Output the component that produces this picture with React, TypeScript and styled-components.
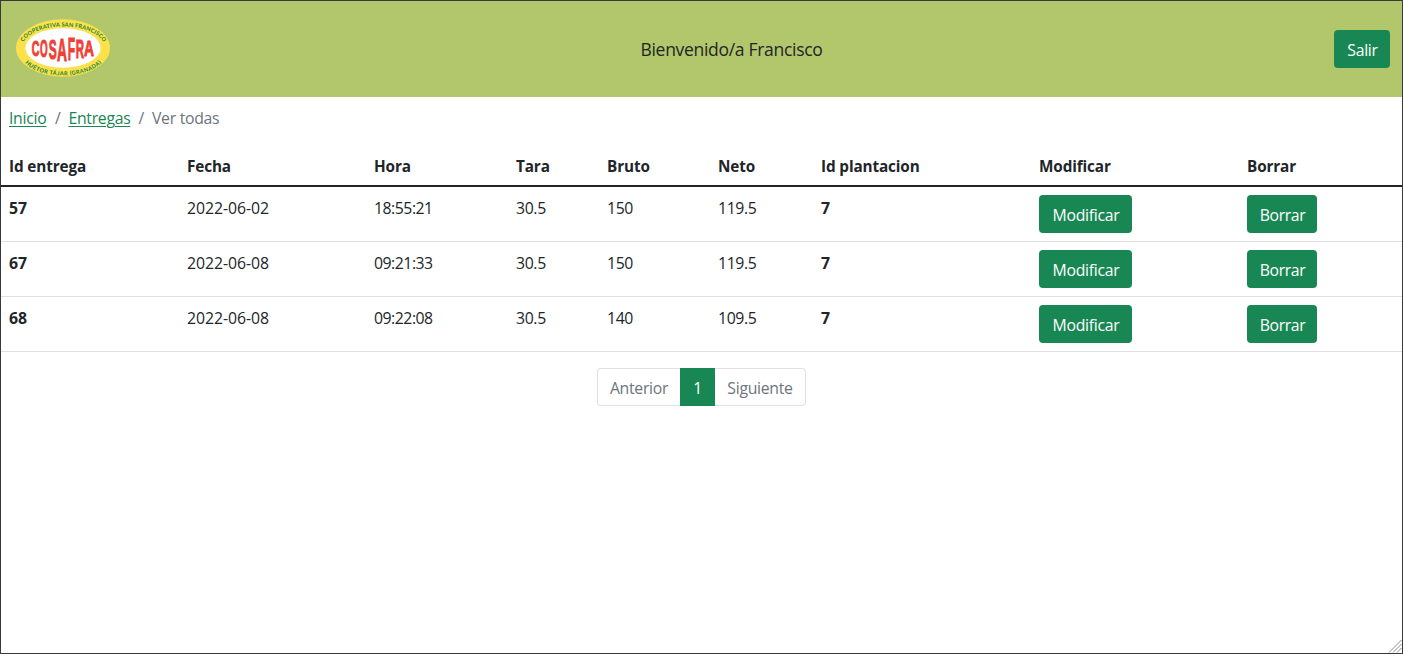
import React from "react";
import styled, { createGlobalStyle } from "styled-components";

const GlobalStyle = createGlobalStyle`
  *, *::before, *::after { box-sizing: border-box; }
  body {
    margin: 0;
    background: #fff;
    color: #212529;
    font-family: "Open Sans", "Noto Sans", sans-serif;
    font-size: 15.8px;
    line-height: 24px;
    letter-spacing: -0.3px;
  }
`;

const Page = styled.div`
  position: relative;
  height: 654px;
  border: 1px solid #38383d;
  overflow: hidden;
`;

const Header = styled.header`
  display: grid;
  grid-template-columns: 1fr auto 1fr;
  align-items: center;
  height: 96px;
  padding: 0 12px 0 14px;
  background: #b2c76b;
`;

const Logo = styled.svg`
  display: block;
  width: 96px;
  height: 58px;
  margin-bottom: 3px;
  letter-spacing: 0;
`;

const Welcome = styled.p`
  margin: 0 0 0 58px;
  font-size: 17.5px;
  letter-spacing: -0.3px;
  white-space: nowrap;
`;

const Button = styled.button<{ $width: number }>`
  display: block;
  width: ${({ $width }) => $width}px;
  height: 38px;
  padding: 1px 0 0 1px;
  border: 0;
  border-radius: 4px;
  background: #198754;
  color: #fff;
  font: inherit;
  letter-spacing: inherit;
  line-height: 24px;
  text-align: center;
  white-space: nowrap;
`;

const HeaderActions = styled.div`
  justify-self: end;
`;

const Breadcrumb = styled.nav`
  display: flex;
  gap: 8px;
  height: 49px;
  padding: 9px 8px 0;
  color: #6c757d;
`;

const Crumb = styled.a<{ $width: number }>`
  width: ${({ $width }) => $width}px;
  color: #198754;
  text-decoration: underline;
  text-decoration-thickness: 1px;
  text-underline-offset: 2px;
  white-space: nowrap;
`;

const Table = styled.table`
  width: 100%;
  table-layout: fixed;
  border-collapse: separate;
  border-spacing: 0;
`;

const Column = styled.col<{ $width: number }>`
  width: ${({ $width }) => $width}px;
`;

const HeadCell = styled.th`
  height: 41px;
  padding: 0 8px;
  border-bottom: 2px solid #212529;
  font-size: 15.3px;
  font-weight: 700;
  letter-spacing: -0.13px;
  text-align: left;
  white-space: nowrap;
`;

const Cell = styled.td<{ $strong?: boolean; $spacing?: number }>`
  height: 55px;
  padding: 9px 8px 7px;
  border-bottom: 1px solid #dee2e6;
  font-weight: ${({ $strong }) => ($strong ? 700 : 400)};
  letter-spacing: ${({ $spacing = -0.36 }) => $spacing}px;
  vertical-align: top;
  white-space: nowrap;
`;

const ActionCell = styled(Cell)`
  padding: 8px;
`;

const Pagination = styled.nav`
  display: flex;
  justify-content: center;
  margin-top: 16px;
`;

const PageItem = styled.span<{ $width: number; $active?: boolean }>`
  width: ${({ $width }) => $width}px;
  height: 38px;
  padding-top: 7px;
  border: 1px solid ${({ $active }) => ($active ? "#198754" : "#dee2e6")};
  background: ${({ $active }) => ($active ? "#198754" : "#fff")};
  color: ${({ $active }) => ($active ? "#fff" : "#6c757d")};
  text-align: center;
  white-space: nowrap;

  &:first-child { border-right: 0; border-radius: 4px 0 0 4px; }
  &:last-child { border-left: 0; border-radius: 0 4px 4px 0; }
`;

const ResizeGrip = styled.svg`
  position: absolute;
  right: 0;
  bottom: 0;
  width: 14px;
  height: 14px;
`;

const letters = [
  { char: "C", x: 95, width: 23, top: 122, bottom: 167 },
  { char: "O", x: 120, width: 23, top: 120, bottom: 171 },
  { char: "S", x: 146, width: 24, top: 118, bottom: 177 },
  { char: "A", x: 171, width: 30, top: 117, bottom: 183 },
  { char: "F", x: 203, width: 22, top: 117, bottom: 181 },
  { char: "R", x: 227, width: 25, top: 119, bottom: 175 },
  { char: "A", x: 252, width: 30, top: 121, bottom: 168 },
];

function CosafraLogo() {
  return (
    <Logo viewBox="45 57 288 174" role="img" aria-label="Cosafra">
      <defs>
        <path id="logo-top" d="M70 126 C106 64 272 64 310 126" />
        <path id="logo-bottom" d="M75 188 C116 239 262 239 305 187" />
      </defs>
      <ellipse cx="189" cy="144" rx="141" ry="86" fill="#fce14b" />
      <ellipse cx="189" cy="144" rx="113" ry="59" fill="#fff" />
      <g fill="#2c8a3f" fontFamily="Lato, sans-serif" fontWeight="900" fontSize="17">
        <text>
          <textPath href="#logo-top" textLength="268">COOPERATIVA SAN FRANCISCO</textPath>
        </text>
        <text>
          <textPath href="#logo-bottom" textLength="248">HUÉTOR TÁJAR (GRANADA)</textPath>
        </text>
      </g>
      <text fill="#ee4035" stroke="#ee4035" strokeWidth="3" fontFamily="Liberation Sans, sans-serif" fontWeight="700">
        {letters.map(({ char, x, width, top, bottom }) => (
          <tspan
            key={x}
            x={x}
            y={bottom}
            fontSize={(bottom - top) / 0.7}
            textLength={width}
            lengthAdjust="spacingAndGlyphs"
          >
            {char}
          </tspan>
        ))}
      </text>
    </Logo>
  );
}

const columns = [
  { title: "Id entrega", width: 178 },
  { title: "Fecha", width: 187 },
  { title: "Hora", width: 142 },
  { title: "Tara", width: 91 },
  { title: "Bruto", width: 111 },
  { title: "Neto", width: 103 },
  { title: "Id plantacion", width: 218 },
  { title: "Modificar", width: 208 },
  { title: "Borrar", width: 163 },
];

const deliveries = [
  { id: 57, date: "2022-06-02", time: "18:55:21", tare: "30.5", gross: 150, net: "119.5", plantation: 7 },
  { id: 67, date: "2022-06-08", time: "09:21:33", tare: "30.5", gross: 150, net: "119.5", plantation: 7 },
  { id: 68, date: "2022-06-08", time: "09:22:08", tare: "30.5", gross: 140, net: "109.5", plantation: 7 },
];

export default function App() {
  return (
    <>
      <GlobalStyle />
      <Page>
        <Header>
          <CosafraLogo />
          <Welcome>Bienvenido/a Francisco</Welcome>
          <HeaderActions>
            <Button $width={56}>Salir</Button>
          </HeaderActions>
        </Header>
        <Breadcrumb>
          <Crumb $width={38}>Inicio</Crumb>
          <span>/</span>
          <Crumb $width={62}>Entregas</Crumb>
          <span>/</span>
          <span>Ver todas</span>
        </Breadcrumb>
        <Table>
          <colgroup>
            {columns.map(({ title, width }) => (
              <Column key={title} $width={width} />
            ))}
          </colgroup>
          <thead>
            <tr>
              {columns.map(({ title }) => (
                <HeadCell key={title}>{title}</HeadCell>
              ))}
            </tr>
          </thead>
          <tbody>
            {deliveries.map((row) => (
              <tr key={row.id}>
                <Cell $strong $spacing={0}>{row.id}</Cell>
                <Cell $spacing={-0.03}>{row.date}</Cell>
                <Cell $spacing={-0.48}>{row.time}</Cell>
                <Cell>{row.tare}</Cell>
                <Cell>{row.gross}</Cell>
                <Cell>{row.net}</Cell>
                <Cell $strong>{row.plantation}</Cell>
                <ActionCell $spacing={-0.3}><Button $width={93}>Modificar</Button></ActionCell>
                <ActionCell $spacing={-0.4}><Button $width={70}>Borrar</Button></ActionCell>
              </tr>
            ))}
          </tbody>
        </Table>
        <Pagination>
          <PageItem $width={83}>Anterior</PageItem>
          <PageItem $width={35} $active>1</PageItem>
          <PageItem $width={91}>Siguiente</PageItem>
        </Pagination>
        <ResizeGrip viewBox="0 0 14 14" stroke="#8b8b8b" strokeWidth="1">
          <path d="M1 13.5 13.5 1M5 13.5 13.5 5M9 13.5 13.5 9" fill="none" />
        </ResizeGrip>
      </Page>
    </>
  );
}
